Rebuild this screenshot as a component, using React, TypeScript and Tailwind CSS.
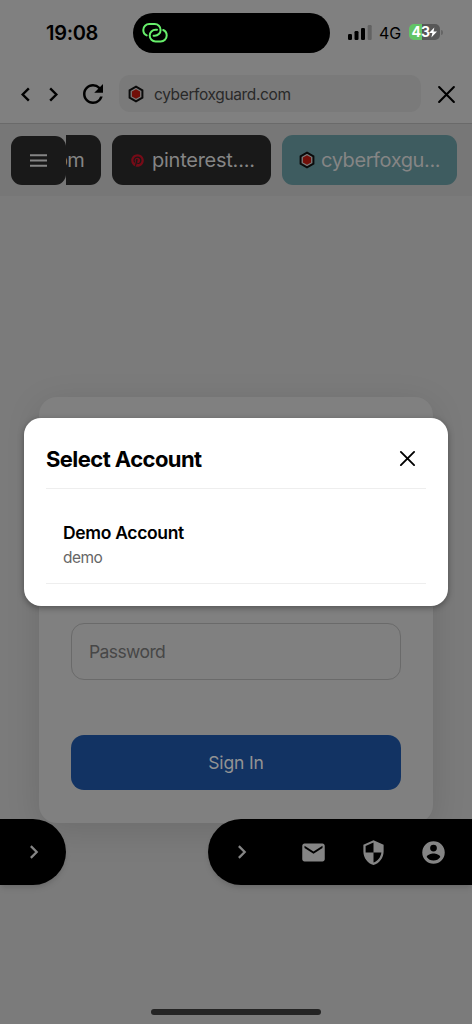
import React from 'react';
import { MdEmail, MdRefresh } from 'react-icons/md';
import { FaPinterest } from 'react-icons/fa';

function Favicon(): JSX.Element {
  return (
    <svg className="w-[18px] h-[18px] shrink-0" viewBox="0 0 18 18">
      <path d="M9 1.7L15.4 5.3V12.7L9 16.3L2.6 12.7V5.3Z" fill="#7a7a7a" stroke="#0a0a0a" strokeWidth="2" />
      <path d="M9 4.3L13.1 6.6V11.4L9 13.7L4.9 11.4V6.6Z" fill="#710f09" />
    </svg>
  );
}

function Chevron({ className }: { className: string }): JSX.Element {
  return (
    <svg className={className} viewBox="0 0 16 16" fill="none" stroke="currentColor">
      <path d="M5.2 2.8L10.4 8L5.2 13.2" />
    </svg>
  );
}

function CloseIcon({ className }: { className: string }): JSX.Element {
  return (
    <svg className={className} viewBox="0 0 18 18" fill="none" stroke="currentColor" strokeLinecap="round">
      <path d="M2 2L16 16M16 2L2 16" />
    </svg>
  );
}

function StatusBar(): JSX.Element {
  return (
    <div className="h-16 flex items-start">
      <div className="w-[133px] pl-[46px] pt-[20px] text-[20px] leading-[26px] font-semibold text-black tracking-[-0.3px]">19:08</div>
      <div className="mt-[13px] w-[197px] h-10 rounded-full bg-black flex items-center pl-[9px]">
        <svg className="w-[26px] h-[22px]" viewBox="0 0 26 22" fill="none" stroke="#67ef6b" strokeWidth="2" strokeLinecap="round">
          <path d="M4.7 13.4C2.6 12.5 1.3 10.4 1.3 8A6 6 0 0 1 7.3 2H12.7A5.9 5.9 0 0 1 12.7 13.8H11.6" />
          <path d="M15 7.7H13.6A5.9 5.9 0 0 0 13.6 19.5H18.7A6 6 0 0 0 24.7 13.5C24.7 11 23.3 8.9 21.2 8" />
        </svg>
      </div>
      <svg className="ml-[18px] mt-[24px] w-[24px] h-[16px]" viewBox="0 0 24 16">
        <rect x="0" y="10" width="4" height="6" rx="1.2" />
        <rect x="6.5" y="7" width="4" height="9" rx="1.2" />
        <rect x="13" y="4" width="4" height="12" rx="1.2" />
        <rect x="19.7" y="1" width="4" height="15" rx="1.2" fill="#626262" />
      </svg>
      <span className="ml-[7px] mt-[21px] w-[24px] text-[16px] leading-[24px] text-black">4G</span>
      <div className="ml-[6px] mt-[24px] flex items-center">
        <div className="w-[31px] h-[16px] rounded-[5px] bg-[linear-gradient(90deg,#62c466_43%,#575757_43%)] flex items-center pl-[2.5px] text-white text-[14px] leading-[16px] font-bold">
          43
          <svg className="w-[8px] h-[11px] -ml-px" viewBox="0 0 9 11" fill="currentColor">
            <path d="M6 0L0 6.2H3.8L2.7 11L9 4.5H5.1Z" />
          </svg>
        </div>
        <div className="ml-px w-[2px] h-[5px] rounded-r-full bg-[#656565]" />
      </div>
    </div>
  );
}

function BrowserBar(): JSX.Element {
  return (
    <div className="h-[60px] flex items-center border-b border-[#6a6a6a] text-black">
      <Chevron className="ml-[16px] mt-px w-[19px] h-[19px] stroke-2 rotate-180" />
      <Chevron className="ml-[9px] mt-px w-[19px] h-[19px] stroke-2" />
      <MdRefresh className="ml-[15px] mt-px w-[30px] h-[30px]" />
      <div className="ml-[11px] w-[302px] h-[37px] rounded-[11px] bg-[#7a7a7a] flex items-center pl-[8px]">
        <Favicon />
        <span className="ml-[9px] pt-[2px] text-[15.5px] text-[#292929] tracking-[-0.37px]">cyberfoxguard.com</span>
      </div>
      <CloseIcon className="ml-[16px] mt-px w-[19px] h-[19px] stroke-2" />
    </div>
  );
}

function SiteTabs(): JSX.Element {
  return (
    <div className="h-[72px] bg-[#777777] flex items-start pt-[11px] pl-[11px] text-[20px] text-[#858585]">
      <div className="w-[90px] flex">
        <div className="z-10 w-[55px] h-[49px] mt-px rounded-[11px] bg-[#191919] flex items-center justify-center">
          <svg className="w-[17px] h-[13px]" viewBox="0 0 17 13" fill="none" stroke="currentColor" strokeWidth="2">
            <path d="M0 1.2H17M0 6.5H17M0 11.8H17" />
          </svg>
        </div>
        <div className="w-[35px] h-[50px] rounded-r-[11px] bg-[#191919] flex items-center justify-end pr-[17px]">
          <span className="tracking-[-0.7px]">om</span>
        </div>
      </div>
      <div className="ml-[11px] w-[159px] h-[50px] rounded-[11px] bg-[#191919] flex items-center pl-[19px]">
        <FaPinterest className="w-[13px] h-[13px] text-[#760b17]" />
        <span className="ml-[8px] tracking-[-0.25px]">pinterest....</span>
      </div>
      <div className="ml-[11px] w-[175px] h-[50px] rounded-[11px] bg-[#3e5c60] flex items-center pl-[16px]">
        <Favicon />
        <span className="ml-[5px] tracking-[-0.4px]">cyberfoxgu...</span>
      </div>
    </div>
  );
}

function LoginCard(): JSX.Element {
  return (
    <div className="mx-[39px] mt-[201px] h-[426px] pt-[226px] px-[32px] rounded-[18px] bg-[#808080] shadow-[0_8px_35px_rgba(0,0,0,0.12)]">
      <div className="h-[57px] rounded-[13px] border border-[#6a6a6a] flex items-center pt-px pl-[17px] text-[17.5px] text-[#474747] tracking-[-0.6px]">Password</div>
      <div className="mt-[55px] h-[55px] pt-px rounded-[13px] bg-[#123363] flex items-center justify-center text-[17.5px] text-[#939393] tracking-[-0.15px]">Sign In</div>
    </div>
  );
}

function FloatingBars(): JSX.Element {
  return (
    <div className="absolute top-[819px] inset-x-0 flex justify-between text-[#858585]">
      <div className="w-[66px] h-[66px] rounded-r-full bg-black shadow-md flex items-center pl-[24.5px]">
        <Chevron className="w-[18px] h-[18px] stroke-2" />
      </div>
      <div className="w-[264px] h-[66px] rounded-l-full bg-black shadow-md flex items-center pl-[24.5px]">
        <Chevron className="w-[18px] h-[18px] stroke-2" />
        <MdEmail className="ml-[49px] w-[27px] h-[27px]" />
        <svg className="ml-[33px] w-[27px] h-[27px]" viewBox="0 0 24 24" fill="currentColor">
          <path d="M12 1L3 5v6c0 5.55 3.84 10.74 9 12 5.16-1.26 9-6.45 9-12V5l-9-4zm0 2.2v8.8h7c-.53 4.12-3.28 7.79-7 8.94V12H5V6.3l7-3.1z" fillRule="evenodd" />
        </svg>
        <svg className="ml-[33px] w-[27px] h-[27px]" viewBox="0 0 24 24" fill="currentColor">
          <path d="M12 2A10 10 0 1 0 12 22A10 10 0 1 0 12 2ZM12 5A3 3 0 1 1 12 11A3 3 0 1 1 12 5ZM12 19.2A7.2 7.2 0 0 1 6 16C6 14 10 12.9 12 12.9S18 14 18 16A7.2 7.2 0 0 1 12 19.2Z" fillRule="evenodd" />
        </svg>
      </div>
    </div>
  );
}

function AccountDialog(): JSX.Element {
  return (
    <div className="absolute left-6 top-[418px] w-[424px] h-[188px] px-[22px] rounded-[17px] bg-white text-black shadow-[0_2px_6px_rgba(0,0,0,0.35)]">
      <div className="h-[71px] pt-[11px] flex items-center justify-between border-b border-[#eeeeee]">
        <h2 className="pt-px text-[22px] font-bold tracking-[-0.57px]">Select Account</h2>
        <CloseIcon className="mr-[10px] w-[17px] h-[17px] stroke-2" />
      </div>
      <div className="h-[95px] pt-[32px] pl-[17px] border-b border-[#eeeeee]">
        <p className="text-[17.5px] leading-[24px] font-semibold tracking-[-0.33px]">Demo Account</p>
        <p className="pt-px text-[15.5px] leading-[24px] text-[#666666] tracking-[-0.5px]">demo</p>
      </div>
    </div>
  );
}

export default function App(): JSX.Element {
  return (
    <div className="relative w-[472px] h-[1024px] bg-[#7b7b7b] overflow-hidden font-['Inter',sans-serif]">
      <div className="bg-[#808080]">
        <StatusBar />
        <BrowserBar />
      </div>
      <SiteTabs />
      <LoginCard />
      <FloatingBars />
      <AccountDialog />
      <div className="absolute left-[151px] top-[1009px] w-[170px] h-[6px] rounded-full bg-[#242424]" />
    </div>
  );
}
